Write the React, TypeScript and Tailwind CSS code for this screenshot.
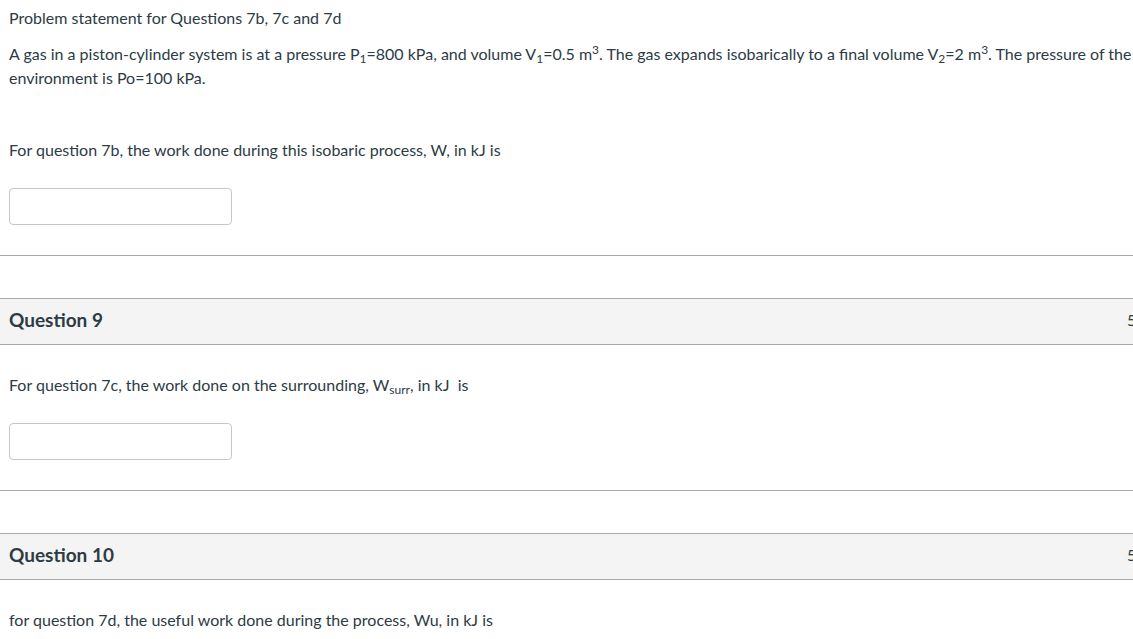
// Quiz page: problem statement + questions 9 and 10

function Answer() {
  return <div className="mt-[26px] h-[37px] w-[223px] rounded-[4px] border border-[#c7c7c7] bg-white" />
}

function Header({ title }: { title: string }) {
  return (
    <div className="flex h-[47px] items-center justify-between border-y border-[#a9a9a9] bg-[#f4f4f4] pb-[4px] pl-[9px] pr-[13px]">
      <h2 className="text-[19px] font-bold leading-[24px] text-[#2d3b45]">{title}</h2>
      <span className="text-[16px] text-[#2d3b45]">5 pts</span>
    </div>
  )
}

function Separator() {
  return <div className="mt-[30px] h-px bg-[#aaaaaa]" />
}

export default function App() {
  return (
    <div className="h-[639px] w-[1133px] overflow-hidden bg-white">
      <div
        className="w-[1175px] text-[16px] leading-[24px] text-[#2d3b45]"
        style={{ fontFamily: "Lato, 'Liberation Sans', sans-serif" }}
      >
        <div className="px-[9px] pt-[6px]">
          <p>Problem statement for Questions 7b, 7c and 7d</p>
          <p className="mt-[12px]">
            A gas in a piston-cylinder system is at a pressure P<sub>1</sub>=800 kPa, and volume V<sub>1</sub>=0.5 m
            <sup>3</sup>. The gas expands isobarically to a final volume V<sub>2</sub>=2 m<sup>3</sup>. The pressure of the
            environment is Po=100 kPa.
          </p>
          <p className="mt-[48px]">For question 7b, the work done during this isobaric process, W, in kJ is</p>
          <Answer />
        </div>
        <Separator />

        <div className="mt-[42px]">
          <Header title="Question 9" />
          <div className="px-[9px] pt-[28px]">
            <p>
              For question 7c, the work done on the surrounding, W<sub>surr</sub>, in kJ&nbsp; is
            </p>
            <Answer />
          </div>
          <Separator />
        </div>

        <div className="mt-[42px]">
          <Header title="Question 10" />
          <div className="px-[9px] pt-[28px]">
            <p>for question 7d, the useful work done during the process, Wu, in kJ is</p>
          </div>
        </div>
      </div>
    </div>
  )
}
